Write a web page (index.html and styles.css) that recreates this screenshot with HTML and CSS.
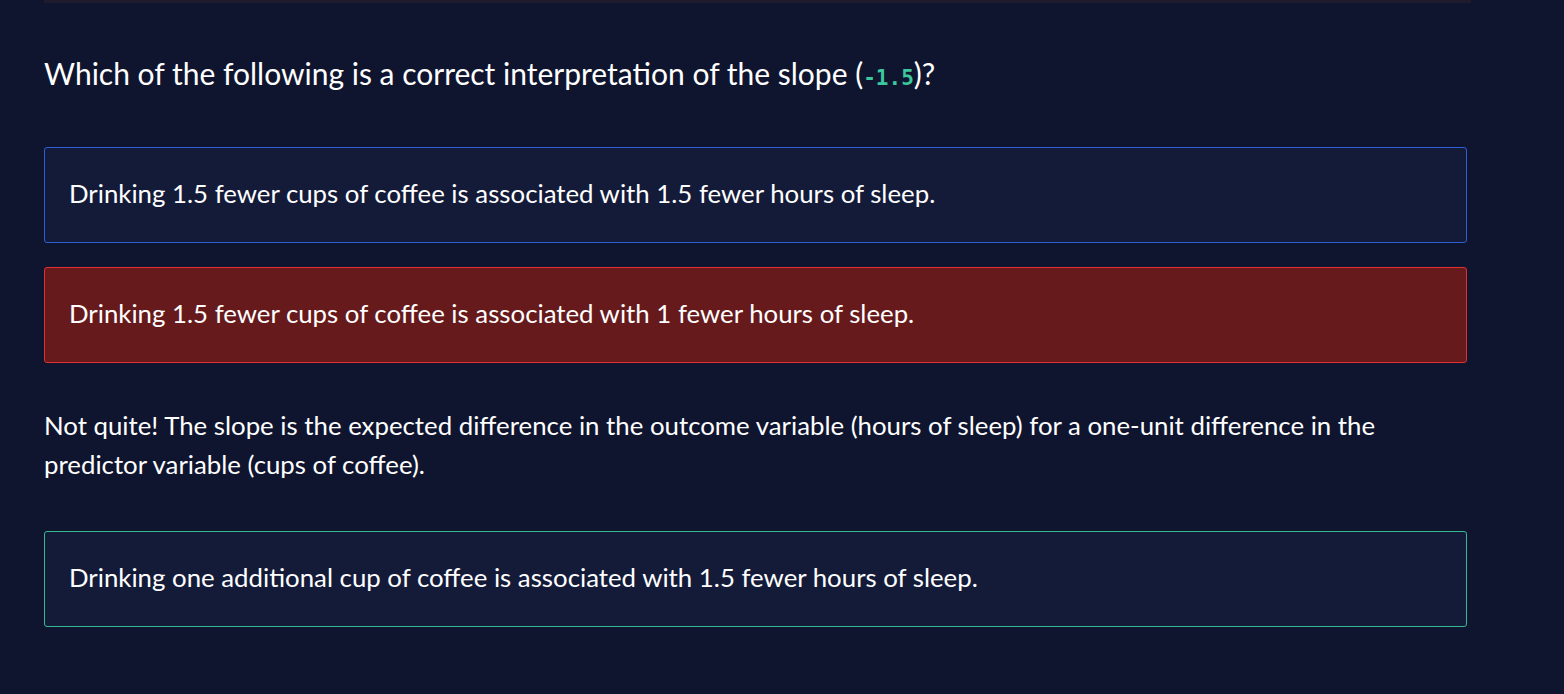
FILE: index.html
```html
<!DOCTYPE html>
<html>
<head>
<meta charset="utf-8">
<link rel="stylesheet" href="styles.css">
</head>
<body>
<div class="page">
  <div class="topbar"></div>
  <h2 class="question">Which of the following is a correct interpretation of the slope (<code class="code">-1.5</code>)?</h2>
  <div class="option option-blue">Drinking 1.5 fewer cups of coffee is associated with 1.5 fewer hours of sleep.</div>
  <div class="option option-red">Drinking 1.5 fewer cups of coffee is associated with 1 fewer hours of sleep.</div>
  <p class="feedback">Not quite! The slope is the expected difference in the outcome variable (hours of sleep) for a one-unit difference in the predictor variable (cups of coffee).</p>
  <div class="option option-green">Drinking one additional cup of coffee is associated with 1.5 fewer hours of sleep.</div>
</div>
</body>
</html>
```
FILE: styles.css
```css
html, body {
  margin: 0;
  padding: 0;
  background: #10152f;
  height: 100%;
}
body {
  font-family: Lato, "Liberation Sans", sans-serif;
  color: #ffffff;
}
.page {
  padding: 0 97px 0 44px;
  display: flex;
  flex-direction: column;
}
.topbar {
  height: 3px;
  background: #1f1b2f;
  margin-right: -4px;
}
.question {
  margin: 51px 0 0 0;
  font-size: 30px;
  font-weight: 400;
  line-height: 38px;
}
.code {
  font-family: "DejaVu Sans Mono", monospace;
  font-weight: bold;
  font-size: 21px;
  color: #3cc79d;
}
.option {
  box-sizing: border-box;
  height: 96px;
  border: 1px solid;
  border-radius: 3px;
  background: #141b39;
  padding: 0 24px 4px 24px;
  display: flex;
  align-items: center;
  font-size: 25.8px;
}
.option-blue { margin-top: 50px; border-color: #2c5fd3; }
.option-red { margin-top: 24px; border-color: #e0302f; background: #671a1c; }
.option-green { margin-top: 47px; border-color: #38b893; }
.feedback {
  margin: 43px 0 0 0;
  font-size: 25.8px;
  line-height: 39px;
}
```
